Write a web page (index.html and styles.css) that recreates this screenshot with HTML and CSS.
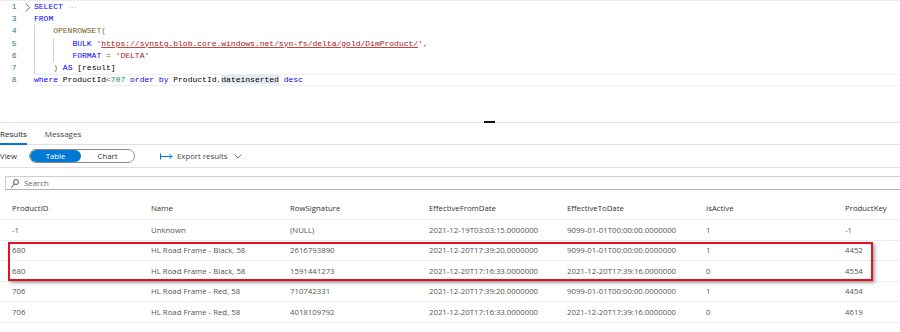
FILE: index.html
```html
<!DOCTYPE html>
<html lang="en">
	<head>
		<meta charset="UTF-8" />
		<title>Query results</title>
		<link rel="stylesheet" href="styles.css">
	</head>
	<body>
		<div class="editor">
			<div class="line">
				<span class="ln">1</span>
				<span class="fold"><svg width="6" height="9" viewBox="0 0 6 9"><polyline points="1,0.5 4.5,4.5 1,8.5" fill="none" stroke="#6b6b6b" stroke-width="1"/></svg></span>
				<span class="code"><span class="kw">SELECT</span> <span class="dots">···</span></span>
			</div>
			<div class="line">
				<span class="ln">3</span>
				<span class="fold"></span>
				<span class="code"><span class="kw">FROM</span></span>
			</div>
			<div class="line">
				<span class="ln">4</span>
				<span class="fold"></span>
				<span class="code"><span class="ind"></span><span class="fn">OPENROWSET</span><span class="op">(</span></span>
			</div>
			<div class="line">
				<span class="ln">5</span>
				<span class="fold"></span>
				<span class="code"><span class="ind"></span><span class="ind"></span><span class="kw">BULK</span> <span class="str">'<u>https://synstg.blob.core.windows.net/syn-fs/delta/gold/DimProduct/</u>'</span><span class="op">,</span></span>
			</div>
			<div class="line">
				<span class="ln">6</span>
				<span class="fold"></span>
				<span class="code"><span class="ind"></span><span class="ind"></span><span class="kw">FORMAT</span> <span class="op">=</span> <span class="str">'DELTA'</span></span>
			</div>
			<div class="line">
				<span class="ln">7</span>
				<span class="fold"></span>
				<span class="code"><span class="ind"></span><span class="op">)</span> <span class="kw">AS</span> [result]</span>
			</div>
			<div class="line current">
				<span class="ln">8</span>
				<span class="fold"></span>
				<span class="code"><span class="kw">where</span> ProductId<span class="op">&lt;</span><span class="num">707</span> <span class="kw">order by</span> ProductId<span class="op">,</span><span class="hl">dateinserted</span> <span class="kw">desc</span></span>
			</div>
		</div>

		<div class="results">
			<div class="splitter"><span class="handle"></span></div>
			<div class="tabs">
				<span class="tab active">Results</span>
				<span class="tab">Messages</span>
			</div>
			<div class="toolbar">
				<span class="view-label">View</span>
				<div class="toggle">
					<span class="toggle-item on">Table</span>
					<span class="toggle-item">Chart</span>
				</div>
				<span class="export">
					<svg width="13" height="7" viewBox="0 0 13 7"><line x1="0.5" y1="0.5" x2="0.5" y2="6.5" stroke="#0078d4"/><line x1="1" y1="3.5" x2="12" y2="3.5" stroke="#0078d4"/><polyline points="9.5,1 12,3.5 9.5,6" fill="none" stroke="#0078d4"/></svg>
					Export results
					<svg class="chev" width="8" height="5" viewBox="0 0 8 5"><polyline points="0.5,0.5 4,4 7.5,0.5" fill="none" stroke="#777"/></svg>
				</span>
			</div>
			<div class="search-wrap">
				<div class="search">
					<svg width="8" height="9" viewBox="0 0 8 9"><circle cx="5" cy="3" r="2.5" fill="none" stroke="#555"/><line x1="3.2" y1="4.8" x2="0.5" y2="8.5" stroke="#555"/></svg>
					<span>Search</span>
				</div>
			</div>
			<div class="grid">
				<div class="row head">
					<span>ProductID</span><span>Name</span><span>RowSignature</span><span>EffectiveFromDate</span><span>EffectiveToDate</span><span>IsActive</span><span>ProductKey</span>
				</div>
				<div class="row">
					<span>-1</span><span>Unknown</span><span>(NULL)</span><span>2021-12-19T03:03:15.0000000</span><span>9099-01-01T00:00:00.0000000</span><span>1</span><span>-1</span>
				</div>
				<div class="row">
					<span>680</span><span>HL Road Frame - Black, 58</span><span>2616793890</span><span>2021-12-20T17:39:20.0000000</span><span>9099-01-01T00:00:00.0000000</span><span>1</span><span>4452</span>
				</div>
				<div class="row">
					<span>680</span><span>HL Road Frame - Black, 58</span><span>1591441273</span><span>2021-12-20T17:16:33.0000000</span><span>2021-12-20T17:39:16.0000000</span><span>0</span><span>4554</span>
				</div>
				<div class="row">
					<span>706</span><span>HL Road Frame - Red, 58</span><span>710742331</span><span>2021-12-20T17:39:20.0000000</span><span>9099-01-01T00:00:00.0000000</span><span>1</span><span>4454</span>
				</div>
				<div class="row">
					<span>706</span><span>HL Road Frame - Red, 58</span><span>4018109792</span><span>2021-12-20T17:16:33.0000000</span><span>2021-12-20T17:39:16.0000000</span><span>0</span><span>4619</span>
				</div>
				<div class="mark"></div>
			</div>
		</div>
	</body>
</html>
```
FILE: styles.css
```css
* {
	box-sizing: border-box;
}
body {
	margin: 0;
	width: 900px;
	height: 332px;
	overflow: hidden;
	background: #fff;
	font-family: "Open Sans", "Liberation Sans", sans-serif;
	color: #333;
}

/* editor */
.editor {
	height: 122px;
	border-top: 1px solid #ececec;
	font-family: "Liberation Mono", monospace;
	font-size: 8px;
	color: #000;
}
.line {
	display: flex;
	height: 12.2px;
	line-height: 12.2px;
	white-space: pre;
}
.ln {
	width: 16.5px;
	text-align: right;
	color: #237893;
}
.fold {
	width: 17.5px;
	display: flex;
	align-items: center;
	padding-left: 8px;
}
.code {
	flex: 1;
	display: block;
}
.current .code {
	border-top: 1px solid #eeeeee;
	border-bottom: 1px solid #eeeeee;
	line-height: 10.2px;
}
.ind {
	display: inline-block;
	width: 4ch;
	height: 12.2px;
	vertical-align: top;
	border-left: 1px solid #d3d3d3;
}
.kw {
	color: #0000ff;
}
.fn {
	color: #795e26;
}
.str {
	color: #a31515;
}
.str u {
	text-decoration-color: #d04040;
	text-underline-offset: 1px;
}
.num {
	color: #098658;
}
.op {
	color: #666;
}
.hl {
	background: #e6ebf1;
}
.dots {
	font-size: 6px;
	letter-spacing: -0.6px;
	color: #999;
}

/* results */
.splitter {
	height: 1px;
	border-top: 1px solid #e1e1e1;
	display: flex;
	justify-content: flex-start;
	padding-left: 484px;
}
.handle {
	width: 11px;
	height: 2px;
	margin-top: -2px;
	background: #111;
}
.tabs {
	height: 22px;
	display: flex;
	align-items: center;
	gap: 18px;
	font-size: 8px;
	border-bottom: 1px solid #e1e1e1;
}
.tab {
	color: #444;
	height: 22px;
	line-height: 22px;
}
.tab.active {
	color: #222;
	border-bottom: 2px solid #0078d4;
}
.toolbar {
	height: 23px;
	display: flex;
	align-items: center;
	font-size: 7.8px;
	border-bottom: 1px solid #e1e1e1;
}
.view-label {
	width: 29px;
	color: #333;
}
.toggle {
	display: flex;
	width: 106px;
	height: 14px;
	border: 1px solid #8a8a8a;
	border-radius: 7px;
	overflow: hidden;
}
.toggle-item {
	flex: 1;
	text-align: center;
	line-height: 12px;
	color: #333;
	border-radius: 7px;
}
.toggle-item.on {
	flex: 0 0 51px;
	background: #0078d4;
	color: #fff;
}
.export {
	display: flex;
	align-items: center;
	gap: 4px;
	margin-left: 25px;
	color: #444;
}
.export .chev {
	margin-left: 3px;
}
.search-wrap {
	padding: 8px 0 0 5px;
}
.search {
	height: 14px;
	display: flex;
	align-items: center;
	gap: 5px;
	padding-left: 5px;
	border: 1px solid #cfcfcf;
	border-bottom-color: #b4b4b4;
	border-right: none;
	font-size: 7.8px;
	color: #666;
}
.grid {
	position: relative;
	margin-top: 6px;
	font-size: 7.8px;
}
.row {
	display: grid;
	grid-template-columns: 139px 139px 139px 138px 139px 139px auto;
	align-items: center;
	height: 20.5px;
	padding-left: 12px;
	border-bottom: 1px solid #ececec;
	color: #555;
	white-space: nowrap;
}
.row.head {
	height: 24px;
	color: #333;
}
.mark {
	position: absolute;
	left: 8px;
	top: 46px;
	width: 865px;
	height: 39px;
	border: 2px solid #e81123;
	box-shadow: 2px 2px 3px rgba(0, 0, 0, 0.35);
}
```
